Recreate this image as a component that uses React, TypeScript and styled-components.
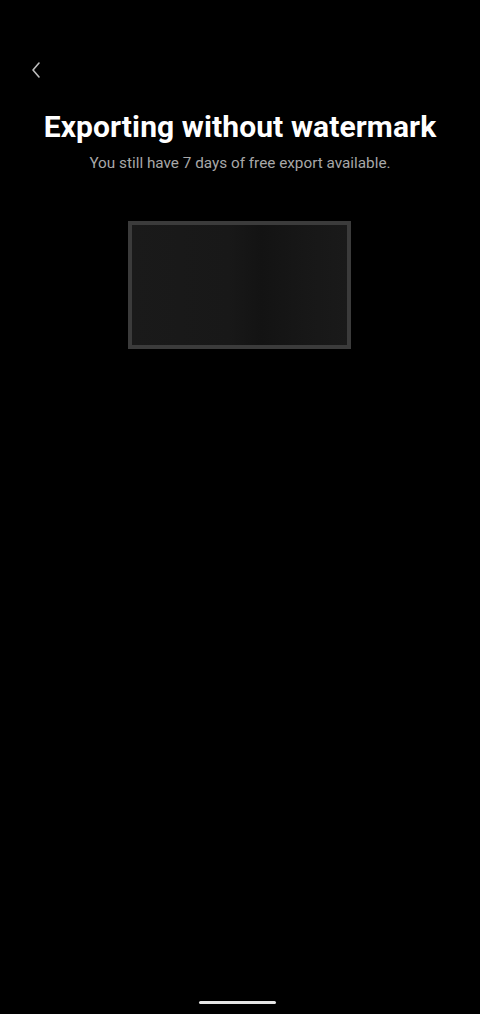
import styled, { createGlobalStyle } from "styled-components";

const GlobalStyle = createGlobalStyle`
  html, body {
    margin: 0;
    padding: 0;
    background: #000;
  }
  body {
    font-family: Roboto, "Noto Sans", sans-serif;
  }
`;

const Screen = styled.div`
  width: 480px;
  height: 1014px;
  background: #000;
  display: flex;
  flex-direction: column;
  align-items: center;
  overflow: hidden;
`;

const TopBar = styled.div`
  align-self: stretch;
  height: 40px;
  margin-top: 50px;
  padding-left: 26px;
  display: flex;
  align-items: center;
`;

const BackButton = styled.button`
  width: 20px;
  height: 24px;
  padding: 0;
  border: none;
  background: none;
  display: flex;
  align-items: center;
  justify-content: center;
`;

const Title = styled.h1`
  margin: 18px 0 0;
  color: #fff;
  font-size: 30px;
  font-weight: 700;
  line-height: 38px;
  letter-spacing: 0.1px;
`;

const Subtitle = styled.p`
  margin: 8px 0 0;
  color: #a8a8a8;
  font-size: 15.3px;
  line-height: 19px;
`;

const Preview = styled.div`
  margin-top: 48px;
  margin-left: -2px;
  width: 223px;
  height: 128px;
  box-sizing: border-box;
  border: 4px solid #3b3b3b;
  background: linear-gradient(90deg, #1a1a1a 0%, #181818 45%, #131313 60%, #171717 80%, #1a1a1a 100%);
`;

const Spacer = styled.div`
  flex: 1;
`;

const HomeIndicator = styled.div`
  width: 77px;
  height: 3px;
  border-radius: 2px;
  background: #e6e6e6;
  margin: 0 5px 10px 0;
`;

export default function App() {
  return (
    <>
      <GlobalStyle />
      <Screen>
        <TopBar>
          <BackButton aria-label="Back">
            <svg width="12" height="18" viewBox="0 0 12 18" fill="none">
              <path d="M9 2 L3 9 L9 16" stroke="#bdbdbd" strokeWidth="1.6" strokeLinecap="round" strokeLinejoin="round" />
            </svg>
          </BackButton>
        </TopBar>
        <Title>Exporting without watermark</Title>
        <Subtitle>You still have 7 days of free export available.</Subtitle>
        <Preview />
        <Spacer />
        <HomeIndicator />
      </Screen>
    </>
  );
}
